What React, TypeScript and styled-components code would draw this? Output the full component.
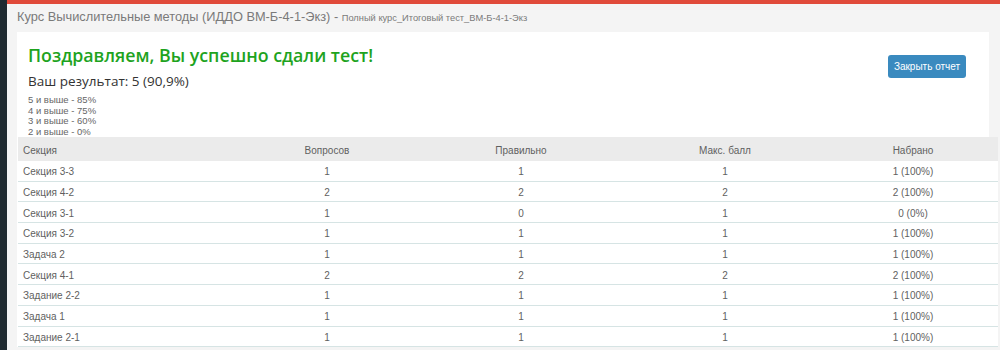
import styled, { createGlobalStyle } from 'styled-components';

const GlobalStyle = createGlobalStyle`
  html, body {
    margin: 0;
    padding: 0;
    background: #f4f4f4;
    overflow: hidden;
  }
  body {
    font-family: "Liberation Sans", Arial, sans-serif;
  }
`;

const Layout = styled.div`
  display: flex;
  width: 1000px;
  height: 350px;
`;

const Sidebar = styled.div`
  width: 7px;
  flex-shrink: 0;
  background: #1f2a31;
`;

const Main = styled.div`
  flex: 1;
  display: flex;
  flex-direction: column;
  min-width: 0;
`;

const TopBar = styled.div`
  height: 4px;
  background: #e04a3a;
`;

const PageTitle = styled.div`
  padding: 5px 0 0 10px;
  box-sizing: border-box;
  height: 28px;
  font-size: 12.8px;
  color: #7a7a7a;
  white-space: nowrap;
`;

const SubTitle = styled.span`
  font-size: 9.3px;
  color: #7a7a7a;
`;

const Panel = styled.div`
  margin-left: 10px;
  width: 972px;
  background: #fff;
  box-sizing: border-box;
`;

const Summary = styled.div`
  display: flex;
  justify-content: space-between;
  align-items: flex-start;
  padding: 9px 23px 0 11px;
`;

const Heading = styled.h2`
  margin: 0;
  font-family: "Open Sans", sans-serif;
  font-weight: 600;
  font-size: 17.8px;
  line-height: 28px;
  color: #1ea31e;
`;

const Result = styled.div`
  margin-top: 3px;
  font-family: "Open Sans", sans-serif;
  font-size: 13.5px;
  line-height: 18px;
  color: #333;
`;

const Scale = styled.div`
  margin-top: 5px;
  font-size: 9.5px;
  line-height: 10.5px;
  color: #666;
`;

const CloseButton = styled.button`
  margin-top: 14px;
  width: 78px;
  height: 23px;
  border: none;
  border-radius: 3px;
  background: #3a8abf;
  color: #fff;
  font-family: "Liberation Sans", Arial, sans-serif;
  font-size: 10px;
  padding: 0;
`;

const Table = styled.div`
  margin-left: 1px;
  width: 980px;
  font-size: 10px;
  color: #5f5f5f;
`;

const Row = styled.div<{ $head?: boolean }>`
  display: grid;
  grid-template-columns: 216px 186px 202px 206px 170px;
  align-items: center;
  height: ${(p) => (p.$head ? '24px' : '19.7px')};
  background: ${(p) => (p.$head ? '#ebebeb' : '#fff')};
  border-bottom: ${(p) => (p.$head ? 'none' : '1px solid #d6e4e4')};
`;

const Cell = styled.div<{ $left?: boolean }>`
  text-align: ${(p) => (p.$left ? 'left' : 'center')};
  padding-left: ${(p) => (p.$left ? '5px' : '0')};
  padding-top: 2px;
  white-space: nowrap;
`;

const rows = [
  ['Секция 3-3', '1', '1', '1', '1 (100%)'],
  ['Секция 4-2', '2', '2', '2', '2 (100%)'],
  ['Секция 3-1', '1', '0', '1', '0 (0%)'],
  ['Секция 3-2', '1', '1', '1', '1 (100%)'],
  ['Задача 2', '1', '1', '1', '1 (100%)'],
  ['Секция 4-1', '2', '2', '2', '2 (100%)'],
  ['Задание 2-2', '1', '1', '1', '1 (100%)'],
  ['Задача 1', '1', '1', '1', '1 (100%)'],
  ['Задание 2-1', '1', '1', '1', '1 (100%)'],
];

export default function App() {
  return (
    <>
      <GlobalStyle />
      <Layout>
        <Sidebar />
        <Main>
          <TopBar />
          <PageTitle>
            Курс Вычислительные методы (ИДДО ВМ-Б-4-1-Экз) -{' '}
            <SubTitle>Полный курс_Итоговый тест_ВМ-Б-4-1-Экз</SubTitle>
          </PageTitle>
          <Panel>
            <Summary>
              <div>
                <Heading>Поздравляем, Вы успешно сдали тест!</Heading>
                <Result>Ваш результат: 5 (90,9%)</Result>
                <Scale>
                  5 и выше - 85%
                  <br />4 и выше - 75%
                  <br />3 и выше - 60%
                  <br />2 и выше - 0%
                </Scale>
              </div>
              <CloseButton>Закрыть отчет</CloseButton>
            </Summary>
            <Table>
              <Row $head>
                <Cell $left>Секция</Cell>
                <Cell>Вопросов</Cell>
                <Cell>Правильно</Cell>
                <Cell>Макс. балл</Cell>
                <Cell>Набрано</Cell>
              </Row>
              {rows.map((r) => (
                <Row key={r[0]}>
                  {r.map((c, i) => (
                    <Cell key={i} $left={i === 0}>
                      {c}
                    </Cell>
                  ))}
                </Row>
              ))}
            </Table>
          </Panel>
        </Main>
      </Layout>
    </>
  );
}
